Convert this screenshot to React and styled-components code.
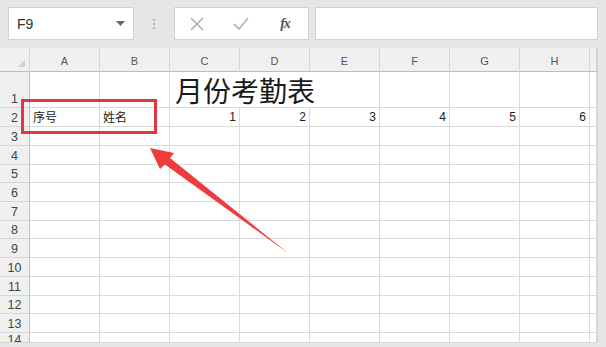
import React from "react";
import styled, { createGlobalStyle } from "styled-components";

const Global = createGlobalStyle`
  html, body { margin: 0; padding: 0; background: #e6e6e6; }
  * { box-sizing: border-box; }
`;

const App_ = styled.div`
  position: relative;
  width: 606px;
  height: 347px;
  overflow: hidden;
  background: #e6e6e6;
  display: flex;
  flex-direction: column;
  font-family: "Liberation Sans", "Noto Sans CJK SC", sans-serif;
`;

const Toolbar = styled.div`
  height: 48px;
  padding: 7px 8px 0 8px;
  display: flex;
  align-items: flex-start;
`;

const Box = styled.div`
  height: 33px;
  background: #fff;
  border: 1px solid #d2d2d2;
  display: flex;
  align-items: center;
`;

const NameBox = styled(Box)`
  width: 126px;
  padding: 0 8px 0 8px;
  justify-content: space-between;
  font-size: 14px;
  color: #333;
`;

const Sep = styled.div`
  width: 40px;
  height: 33px;
  display: flex;
  flex-direction: column;
  align-items: center;
  justify-content: center;
  gap: 2px;
`;

const Dot = styled.span`
  width: 2px;
  height: 2px;
  background: #b4b4b4;
`;

const FxBox = styled(Box)`
  width: 135px;
  padding: 0;
`;

const IconSlot = styled.div`
  width: 44px;
  display: flex;
  align-items: center;
  justify-content: center;
  color: #a8a8a8;
`;

const FxText = styled.span`
  font-family: "Liberation Serif", serif;
  font-style: italic;
  font-size: 14px;
  color: #555;
  font-weight: bold;
  letter-spacing: -1px;
`;

const Input = styled(Box)`
  margin-left: 6px;
  flex: 1;
`;

const Sheet = styled.div`
  display: flex;
  height: 295px;
`;

const Grid = styled.div`
  display: grid;
  grid-template-columns: 30px repeat(8, 70px) 7px;
  grid-template-rows: 24px 36px 19px 19px repeat(10, 18.7px) 10px;
  background: #fff;
  width: 597px;
  overflow: hidden;
`;

const Cell = styled.div`
  border-right: 1px solid #dadada;
  border-bottom: 1px solid #dadada;
  display: flex;
  align-items: flex-end;
  justify-content: ${(p) => (p.$right ? "flex-end" : "flex-start")};
  padding: 0 3px 1px 3px;
  font-size: 12px;
  line-height: 16px;
  color: #222;
  white-space: nowrap;
  grid-column: ${(p) => (p.$span ? `span ${p.$span}` : "auto")};
  font-family: ${(p) => (p.$cjk ? `"Noto Sans CJK SC", sans-serif` : `"Liberation Sans", sans-serif`)};
`;

const ColHead = styled.div`
  background: #f0f0f0;
  border-right: 1px solid #d6d6d6;
  border-bottom: 1px solid #bdbdbd;
  display: flex;
  align-items: center;
  justify-content: center;
  font-size: 11px;
  color: #555;
  padding-top: 2px;
  position: relative;
`;

const RowHead = styled.div`
  background: #f0f0f0;
  border-right: 1px solid #bdbdbd;
  border-bottom: 1px solid #d6d6d6;
  display: flex;
  align-items: ${(p) => (p.$clip ? "flex-start" : "flex-end")};
  justify-content: center;
  overflow: hidden;
  font-size: 12.5px;
  line-height: 14px;
  color: #444;
  padding-bottom: ${(p) => (p.$clip ? "0" : "1px")};
`;

const Corner = styled.div`
  position: absolute;
  right: 4px;
  bottom: 4px;
  width: 0;
  height: 0;
  border-left: 7px solid transparent;
  border-bottom: 7px solid #cfcfcf;
`;

const Title = styled(Cell)`
  font-family: "Noto Sans CJK SC", sans-serif;
  font-size: 28px;
  line-height: 33px;
  padding: 0 0 0 5px;
  color: #1a1a1a;
`;

const RightStrip = styled.div`
  width: 9px;
  background: #e6e6e6;
  border-left: 1px solid #d0d0d0;
`;

const Bottom = styled.div`
  height: 4px;
  background: #e6e6e6;
`;

const Mark = styled.div`
  position: absolute;
  left: 21px;
  top: 99px;
  width: 136px;
  height: 35px;
  border: 3px solid #e0383e;
  pointer-events: none;
`;

const Overlay = styled.svg`
  position: absolute;
  left: 0;
  top: 0;
  pointer-events: none;
`;

const cols = ["A", "B", "C", "D", "E", "F", "G", "H", ""];

export default function App() {
  const rows = [];
  rows.push(
    <RowHead key="r1">1</RowHead>,
    <Cell key="1a" />,
    <Cell key="1b" />,
    <Title key="1t" $span={3}>月份考勤表</Title>,
    <Cell key="1f" />,
    <Cell key="1g" />,
    <Cell key="1h" />,
    <Cell key="1i" />
  );
  rows.push(
    <RowHead key="r2">2</RowHead>,
    <Cell key="2a" $cjk>序号</Cell>,
    <Cell key="2b" $cjk>姓名</Cell>
  );
  [1, 2, 3, 4, 5, 6].forEach((n) =>
    rows.push(
      <Cell key={"2n" + n} $right>
        {n}
      </Cell>
    )
  );
  rows.push(<Cell key="2i" />);
  for (let r = 3; r <= 14; r++) {
    rows.push(
      <RowHead key={"r" + r} $clip={r === 14}>
        {r}
      </RowHead>
    );
    for (let c = 0; c < 9; c++) rows.push(<Cell key={r + "-" + c} />);
  }

  return (
    <>
      <Global />
      <App_>
        <Toolbar>
          <NameBox>
            <span>F9</span>
            <svg width="9" height="5" viewBox="0 0 9 5">
              <path d="M0 0 L9 0 L4.5 5 Z" fill="#666" />
            </svg>
          </NameBox>
          <Sep>
            <Dot />
            <Dot />
            <Dot />
          </Sep>
          <FxBox>
            <IconSlot>
              <svg width="14" height="14" viewBox="0 0 14 14">
                <path d="M1 1 L13 13 M13 1 L1 13" stroke="#b0b0b0" strokeWidth="1.6" fill="none" />
              </svg>
            </IconSlot>
            <IconSlot>
              <svg width="16" height="13" viewBox="0 0 16 13">
                <path d="M1 7 L6 12 L15 1" stroke="#b8b8b8" strokeWidth="1.8" fill="none" />
              </svg>
            </IconSlot>
            <IconSlot>
              <FxText>fx</FxText>
            </IconSlot>
          </FxBox>
          <Input />
        </Toolbar>
        <Sheet>
          <Grid>
            <ColHead>
              <Corner />
            </ColHead>
            {cols.map((c, i) => (
              <ColHead key={i}>{c}</ColHead>
            ))}
            {rows}
          </Grid>
          <RightStrip />
        </Sheet>
        <Bottom />
        <Mark />
        <Overlay width="606" height="347" viewBox="0 0 606 347">
          <polygon
            points="150,148 174,153 170,158 288,253 165,164.5 160,169"
            fill="#ee3b3b"
          />
        </Overlay>
      </App_>
    </>
  );
}
